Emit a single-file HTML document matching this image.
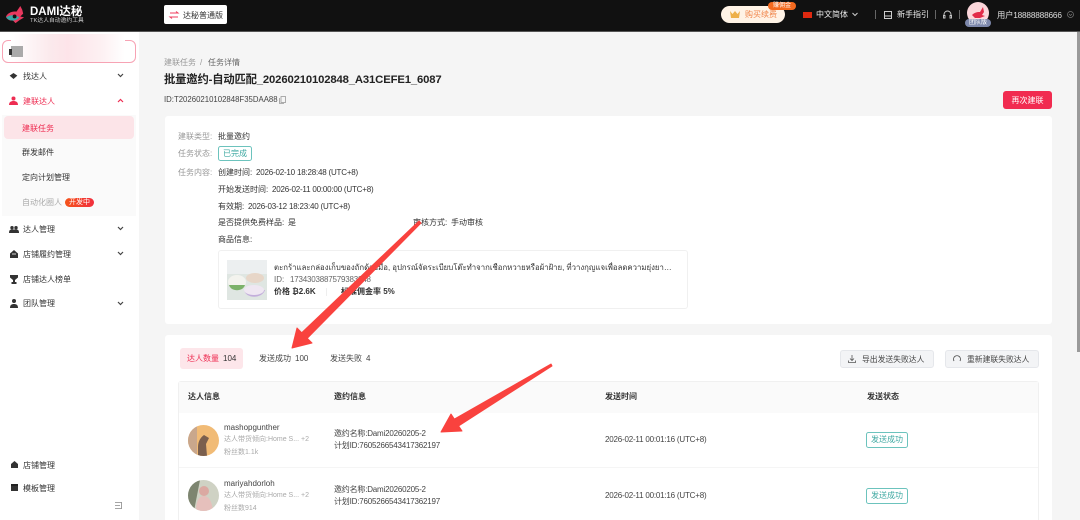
<!DOCTYPE html>
<html lang="zh"><head><meta charset="utf-8"><title>DAMI达秘</title>
<style>
*{box-sizing:border-box}
html,body{margin:0;padding:0;width:1080px;height:520px;overflow:hidden;background:#f5f5f5;font-family:"Liberation Sans","Noto Sans CJK SC",sans-serif;color:#333}
.t{position:absolute;white-space:nowrap;font-size:8px;line-height:14px}
.b{position:absolute}
.g{color:#999}
.m{color:#444}
.n{letter-spacing:-.2px}
.s{color:#aaa;font-size:7px}
svg{position:absolute;overflow:visible}
.tag{position:absolute;border:1px solid #6cc3bd;border-radius:2.500px;color:#3fa9a2;background:#fff;font-size:8px;text-align:center;white-space:nowrap}
.btn{position:absolute;top:350px;height:18px;background:#f3f4f6;border:1px solid #e5e7eb;border-radius:3px;color:#444;font-size:7.800px;line-height:17px;white-space:nowrap}
</style></head><body>

<!-- top bar -->
<div class="b" style="left:0;top:0;width:1080px;height:32px;background:#111;border-bottom:1px solid #555"></div>
<svg style="left:5px;top:5px" width="23" height="21" viewBox="0 0 24 22"><path d="M1 12C3 8 8 6 12 7L16 1l2 4 1 4-3 3 4 1-5 3-4 3-3-3C5 17 2 15 1 12z" fill="#e8385e"/><path d="M1 13c4-3 10-3 14 0-3 4-10 5-14 0z" fill="#3aa6a6"/><circle cx="10" cy="12" r="2" fill="#111"/></svg>
<div class="t" style="left:30px;top:5px;font-size:11.500px;line-height:14px;font-weight:bold;color:#fff">DAMI达秘</div>
<div class="t" style="left:30px;top:17px;font-size:5.800px;line-height:9px;color:#ccc">TK达人自动邀约工具</div>
<div class="b" style="left:164px;top:5px;width:63px;height:19px;background:#fff;border-radius:2px"></div>
<svg style="left:169px;top:11px" width="10" height="8" viewBox="0 0 10 8"><path d="M1 2h8L7 .5M9 6H1l2 1.500" fill="none" stroke="#ef3f5f"/></svg>
<div class="t" style="left:183px;top:9px;color:#333">达秘普通版</div>

<div class="b" style="left:721px;top:6px;width:64px;height:17px;background:#fff3e6;border-radius:9px"></div>
<svg style="left:730px;top:11px" width="10" height="7" viewBox="0 0 10 7"><path d="M0 0l2.500 3L5 0l2.500 3L10 0 9 7H1z" fill="#eeb04a"/></svg>
<div class="t" style="left:745px;top:8px;color:#f0854a">购买续费</div>
<div class="b" style="left:768px;top:2px;width:28px;height:8px;background:#f46a1f;border-radius:4px;color:#fff;font-size:6px;line-height:8px;text-align:center;white-space:nowrap">赚佣金</div>
<div class="b" style="left:803px;top:12px;width:9px;height:6px;background:#de2910"></div>
<div class="t" style="left:816px;top:8px;color:#eee">中文简体</div>
<svg style="left:852px;top:12px" width="6" height="5" viewBox="0 0 6 5"><path d="M.5 1L3 3.500 5.500 1" fill="none" stroke="#ccc"/></svg>
<div class="b" style="left:875px;top:10px;width:1px;height:9px;background:#666"></div>
<svg style="left:884px;top:11px" width="8" height="8" viewBox="0 0 8 8"><path d="M.5.500h7v7h-7zM.5 5h7" fill="none" stroke="#ccc"/></svg>
<div class="t" style="left:897px;top:8px;color:#eee">新手指引</div>
<div class="b" style="left:935px;top:10px;width:1px;height:9px;background:#666"></div>
<svg style="left:943px;top:10px" width="9" height="9" viewBox="0 0 9 9"><path d="M1 6V4.500a3.500 3.500 0 0 1 7 0V6M.5 5.500h1.500v2.500H.5zM7 5.500h1.500v2.500H7z" fill="none" stroke="#ccc" stroke-width=".9"/></svg>
<div class="b" style="left:959px;top:10px;width:1px;height:9px;background:#666"></div>
<div class="b" style="left:967px;top:2px;width:22px;height:22px;border-radius:50%;background:#fbd6da"></div>
<svg style="left:971px;top:7px" width="15" height="12" viewBox="0 0 15 12"><path d="M1 8c3-3 6-3 8-3l3-5 1 5-2 3 3 1-5 2H4z" fill="#e22b49"/></svg>
<div class="b" style="left:965px;top:19px;width:26px;height:8px;background:#7d88ab;border-radius:4px;color:#fff;font-size:6px;line-height:8px;text-align:center;white-space:nowrap">团队版</div>
<div class="t n" style="left:997px;top:8px;color:#ddd;font-size:8.300px">用户18888888666</div>
<svg style="left:1067px;top:11px" width="7" height="7" viewBox="0 0 7 7"><circle cx="3.500" cy="3.500" r="3" fill="none" stroke="#777" stroke-width=".7"/><path d="M2 3l1.500 1.500L5 3" fill="none" stroke="#777" stroke-width=".7"/></svg>

<!-- sidebar -->
<div class="b" style="left:0;top:32px;width:139px;height:488px;background:#fff"></div>
<div class="b" style="left:2px;top:40px;width:134px;height:23px;border:1px solid #f7a3b4;border-radius:6px"></div>
<div class="b" style="left:11px;top:34px;width:114px;height:28px;background:linear-gradient(90deg,#fff 0,#fbe9ec 35%,#fde4e9 50%,#fdf1f3 80%,#fff 100%)"></div>
<div class="b" style="left:11px;top:46px;width:12px;height:11px;background:#aaa"></div>
<div class="b" style="left:9px;top:49px;width:3px;height:6px;background:#333"></div>

<svg style="left:9px;top:73px" width="9" height="6" viewBox="0 0 9 7"><path d="M0 3l4.500-3L9 3 4.500 7z" fill="#333"/></svg>
<div class="t" style="left:23px;top:70px">找达人</div>
<svg style="left:117px;top:73px" width="7" height="5" viewBox="0 0 7 5"><path d="M1 1l2.500 2.500L6 1" fill="none" stroke="#444" stroke-width="1.200"/></svg>
<svg style="left:9px;top:96px" width="9" height="9" viewBox="0 0 9 9"><circle cx="4.500" cy="2.500" r="2" fill="#ee2d52"/><path d="M0 9c0-3 2-4 4.500-4S9 6 9 9z" fill="#ee2d52"/></svg>
<div class="t" style="left:23px;top:95px;color:#ee2d52">建联达人</div>
<svg style="left:117px;top:98px" width="7" height="5" viewBox="0 0 7 5"><path d="M1 4l2.500-2.500L6 4" fill="none" stroke="#ee2d52" stroke-width="1.200"/></svg>

<div class="b" style="left:2px;top:115px;width:134px;height:101px;background:#fafafa"></div>
<div class="b" style="left:4px;top:116px;width:130px;height:23px;background:#fce4e8;border-radius:4px"></div>
<div class="t" style="left:22px;top:122px;color:#ee2d52">建联任务</div>
<div class="t" style="left:22px;top:146px">群发邮件</div>
<div class="t" style="left:22px;top:171px">定向计划管理</div>
<div class="t" style="left:22px;top:196px;color:#aaa">自动化圈人</div>
<div class="b" style="left:65px;top:198px;width:29px;height:9px;border-radius:5px;background:linear-gradient(90deg,#f5541b,#f12f3e);color:#fff;font-size:7px;line-height:9px;text-align:center">开发中</div>

<svg style="left:9px;top:226px" width="10" height="7" viewBox="0 0 10 7"><circle cx="3" cy="1.700" r="1.700" fill="#333"/><circle cx="7" cy="1.700" r="1.700" fill="#333"/><path d="M0 7c0-3 1-3.500 3-3.500h4c2 0 3 .5 3 3.500z" fill="#333"/></svg>
<div class="t" style="left:23px;top:223px">达人管理</div>
<svg style="left:117px;top:226px" width="7" height="5" viewBox="0 0 7 5"><path d="M1 1l2.500 2.500L6 1" fill="none" stroke="#444" stroke-width="1.200"/></svg>
<svg style="left:10px;top:250px" width="8" height="8" viewBox="0 0 8 8"><path d="M0 3.500L4 0l4 3.500V8H0z" fill="#333"/><path d="M2 4h4" stroke="#fff" stroke-width=".8"/></svg>
<div class="t" style="left:23px;top:248px">店铺履约管理</div>
<svg style="left:117px;top:251px" width="7" height="5" viewBox="0 0 7 5"><path d="M1 1l2.500 2.500L6 1" fill="none" stroke="#444" stroke-width="1.200"/></svg>
<svg style="left:10px;top:275px" width="8" height="9" viewBox="0 0 8 9"><path d="M0 0h8v2.500L5 5v2h1.500v2h-5V7H3V5L0 2.500z" fill="#333"/></svg>
<div class="t" style="left:23px;top:273px">店铺达人榜单</div>
<svg style="left:10px;top:299px" width="8" height="9" viewBox="0 0 8 9"><circle cx="4" cy="2" r="2" fill="#333"/><path d="M0 9c0-3 1.500-4 4-4s4 1 4 4z" fill="#333"/></svg>
<div class="t" style="left:23px;top:297px">团队管理</div>
<svg style="left:117px;top:301px" width="7" height="5" viewBox="0 0 7 5"><path d="M1 1l2.500 2.500L6 1" fill="none" stroke="#444" stroke-width="1.200"/></svg>

<svg style="left:11px;top:461px" width="7" height="7" viewBox="0 0 7 7"><path d="M0 3L3.500 0 7 3v4H0z" fill="#333"/></svg>
<div class="t" style="left:23px;top:459px">店铺管理</div>
<div class="b" style="left:11px;top:484px;width:7px;height:7px;background:#333;border-top:2px solid #222"></div>
<div class="t" style="left:23px;top:482px">模板管理</div>
<svg style="left:115px;top:502px" width="7" height="7" viewBox="0 0 7 7"><path d="M0 .5h7M0 3.500h5M0 6.500h7M6.500 .5v6" fill="none" stroke="#888" stroke-width=".8"/></svg>

<!-- header -->
<div class="t g" style="left:164px;top:56px">建联任务</div>
<div class="t g" style="left:200px;top:56px">/</div>
<div class="t" style="left:208px;top:56px;color:#666">任务详情</div>
<div class="t" style="left:164px;top:73px;font-size:11.300px;line-height:15px;font-weight:bold;color:#222;letter-spacing:-.15px">批量邀约-自动匹配_20260210102848_A31CEFE1_6087</div>
<div class="t" style="left:164px;top:93px;color:#444;font-size:7.800px">ID:T20260210102848F35DAA88</div>
<svg style="left:279px;top:96px" width="7" height="8" viewBox="0 0 7 8"><rect x="2" y=".5" width="4.500" height="6" fill="none" stroke="#999" stroke-width=".8"/><path d="M.5 2v5.500H5" fill="none" stroke="#999" stroke-width=".8"/></svg>
<div class="b" style="left:1003px;top:91px;width:49px;height:18px;background:#f12b50;border-radius:3px;color:#fff;font-size:8px;line-height:19px;text-align:center">再次建联</div>

<!-- card 1 -->
<div class="b" style="left:165px;top:116px;width:887px;height:208px;background:#fff;border-radius:3px"></div>
<div class="t g" style="left:178px;top:130px">建联类型:</div>
<div class="t" style="left:218px;top:130px">批量邀约</div>
<div class="t g" style="left:178px;top:147px">任务状态:</div>
<div class="tag" style="left:218px;top:146px;width:34px;height:15px;line-height:14px">已完成</div>
<div class="t g" style="left:178px;top:166px">任务内容:</div>
<div class="t" style="left:218px;top:166px">创建时间:</div><div class="t n" style="left:256px;top:166px">2026-02-10 18:28:48 (UTC+8)</div>
<div class="t" style="left:218px;top:183px">开始发送时间:</div><div class="t n" style="left:272px;top:183px">2026-02-11 00:00:00 (UTC+8)</div>
<div class="t" style="left:218px;top:200px">有效期:</div><div class="t n" style="left:248px;top:200px">2026-03-12 18:23:40 (UTC+8)</div>
<div class="t" style="left:218px;top:216px">是否提供免费样品:</div><div class="t" style="left:288px;top:216px">是</div>
<div class="t" style="left:413px;top:216px">审核方式:</div><div class="t" style="left:451px;top:216px">手动审核</div>
<div class="t" style="left:218px;top:233px">商品信息:</div>
<div class="b" style="left:218px;top:250px;width:470px;height:59px;border:1px solid #f0f0f0;border-radius:3px"></div>
<svg style="left:227px;top:260px" width="40" height="40" viewBox="0 0 40 40"><rect width="40" height="40" fill="#dfe6e2"/><rect y="0" width="40" height="14" fill="#eceff0"/><ellipse cx="10" cy="22" rx="9" ry="7" fill="#f3f3ee"/><path d="M2 25c2 7 14 7 16 0z" fill="#7cb26a"/><ellipse cx="28" cy="18" rx="9" ry="5" fill="#e7d6c8"/><path d="M17 30c2 9 18 9 21 0z" fill="#c3aedb"/><ellipse cx="27" cy="30" rx="10" ry="5" fill="#efe7f2"/></svg>
<div class="t" style="left:274px;top:261px;width:402px;overflow:hidden;text-overflow:ellipsis;font-size:7.800px;font-family:'Liberation Sans','DejaVu Sans','Noto Sans CJK SC',sans-serif">ตะกร้าและกล่องเก็บของถักด้วยมือ, อุปกรณ์จัดระเบียบโต๊ะทำจากเชือกหวายหรือผ้าฝ้าย, ที่วางกุญแจเพื่อลดความยุ่งยากในบ้านของคุณ</div>
<div class="t" style="left:274px;top:273px;color:#666">ID:</div><div class="t n" style="left:290px;top:273px;color:#666">1734303887579383848</div>
<div class="t" style="left:274px;top:285px;font-weight:bold;color:#333">价格 ₿2.6K</div>
<div class="b" style="left:326px;top:288px;width:1px;height:8px;background:#eee"></div>
<div class="t" style="left:341px;top:285px;font-weight:bold;color:#333">标准佣金率 5%</div>

<!-- card 2 -->
<div class="b" style="left:165px;top:335px;width:887px;height:185px;background:#fff;border-radius:3px 3px 0 0"></div>
<div class="b" style="left:180px;top:348px;width:63px;height:21px;background:#fde6ea;border-radius:3px"></div>
<div class="t" style="left:187px;top:352px;color:#ee2d52">达人数量</div>
<div class="t" style="left:223px;top:352px">104</div>
<div class="t" style="left:259px;top:352px;color:#444">发送成功</div><div class="t" style="left:295px;top:352px;color:#444">100</div>
<div class="t" style="left:330px;top:352px;color:#444">发送失败</div><div class="t" style="left:366px;top:352px;color:#444">4</div>
<div class="btn" style="left:840px;width:94px;padding-left:21px">导出发送失败达人</div>
<svg style="left:848px;top:355px" width="8" height="8" viewBox="0 0 8 8"><path d="M4 0v5M2 3.500L4 5.500l2-2M.5 5.500v2h7v-2" fill="none" stroke="#555" stroke-width=".8"/></svg>
<div class="btn" style="left:945px;width:94px;padding-left:21px">重新建联失败达人</div>
<svg style="left:953px;top:355px" width="8" height="8" viewBox="0 0 8 8"><path d="M1 6A3.500 3.500 0 1 1 7 6" fill="none" stroke="#555" stroke-width=".9"/></svg>

<!-- table -->
<div class="b" style="left:178px;top:381px;width:861px;height:139px;border:1px solid #f0f0f0;border-bottom:0;border-radius:3px 3px 0 0"></div>
<div class="b" style="left:179px;top:382px;width:859px;height:31px;background:#fafafa"></div>
<div class="b" style="left:179px;top:467px;width:859px;height:1px;background:#f5f5f5"></div>
<div class="t" style="left:188px;top:390px;font-weight:bold">达人信息</div>
<div class="t" style="left:334px;top:390px;font-weight:bold">邀约信息</div>
<div class="t" style="left:605px;top:390px;font-weight:bold">发送时间</div>
<div class="t" style="left:867px;top:390px;font-weight:bold">发送状态</div>

<svg style="left:188px;top:425px" width="31" height="31" viewBox="0 0 31 31"><defs><clipPath id="c1"><circle cx="15.500" cy="15.500" r="15.500"/></clipPath><clipPath id="c2"><circle cx="15.500" cy="15.500" r="15.500"/></clipPath></defs><g clip-path="url(#c1)"><rect width="31" height="31" fill="#f1bb76"/><path d="M0 0h9v31H0z" fill="#c9a78c"/><path d="M10 22c0-6 3-10 6-12l5 3-3 6 1 12H10z" fill="#7a5f4e"/></g></svg>
<div class="t" style="left:224px;top:421px;color:#444">mashopgunther</div>
<div class="t s" style="left:224px;top:433px">达人带货倾向:Home S... +2</div>
<div class="t s" style="left:224px;top:446px">粉丝数1.1k</div>
<div class="t m n" style="left:334px;top:427px">邀约名称:Dami20260205-2</div>
<div class="t m n" style="left:334px;top:439px">计划ID:7605266543417362197</div>
<div class="t m n" style="left:605px;top:433px">2026-02-11 00:01:16 (UTC+8)</div>
<div class="tag" style="left:866px;top:432px;width:42px;height:16px;line-height:14px">发送成功</div>

<svg style="left:188px;top:480px" width="31" height="31" viewBox="0 0 31 31"><g clip-path="url(#c2)"><rect width="31" height="31" fill="#cfd2c4"/><path d="M0 0h12L6 31H0z" fill="#7d8570"/><path d="M8 31c0-10 3-15 8-15s8 6 9 15z" fill="#e6c0bc"/><circle cx="16" cy="11" r="5" fill="#dba9a2"/></g></svg>
<div class="t" style="left:224px;top:477px;color:#444">mariyahdorloh</div>
<div class="t s" style="left:224px;top:489px">达人带货倾向:Home S... +2</div>
<div class="t s" style="left:224px;top:502px">粉丝数914</div>
<div class="t m n" style="left:334px;top:483px">邀约名称:Dami20260205-2</div>
<div class="t m n" style="left:334px;top:495px">计划ID:7605266543417362197</div>
<div class="t m n" style="left:605px;top:489px">2026-02-11 00:01:16 (UTC+8)</div>
<div class="tag" style="left:866px;top:488px;width:42px;height:16px;line-height:14px">发送成功</div>

<!-- scrollbar -->
<div class="b" style="left:1077px;top:32px;width:3px;height:320px;background:#9a9a9a"></div>

<!-- arrows -->
<svg style="left:0;top:0" width="1080" height="520" viewBox="0 0 1080 520">
<path d="M421 223L307.300 338.300 312 343 292 348 297 328 301.700 332.700 419 221z" fill="#f9423e" stroke="#f9423e" stroke-width="1" stroke-linejoin="round"/>
<path d="M552 366L458.600 425.900 462 431 441 432 451 414 454.400 419.100 551 364z" fill="#f9423e" stroke="#f9423e" stroke-width="1" stroke-linejoin="round"/>
</svg>
</body></html>
